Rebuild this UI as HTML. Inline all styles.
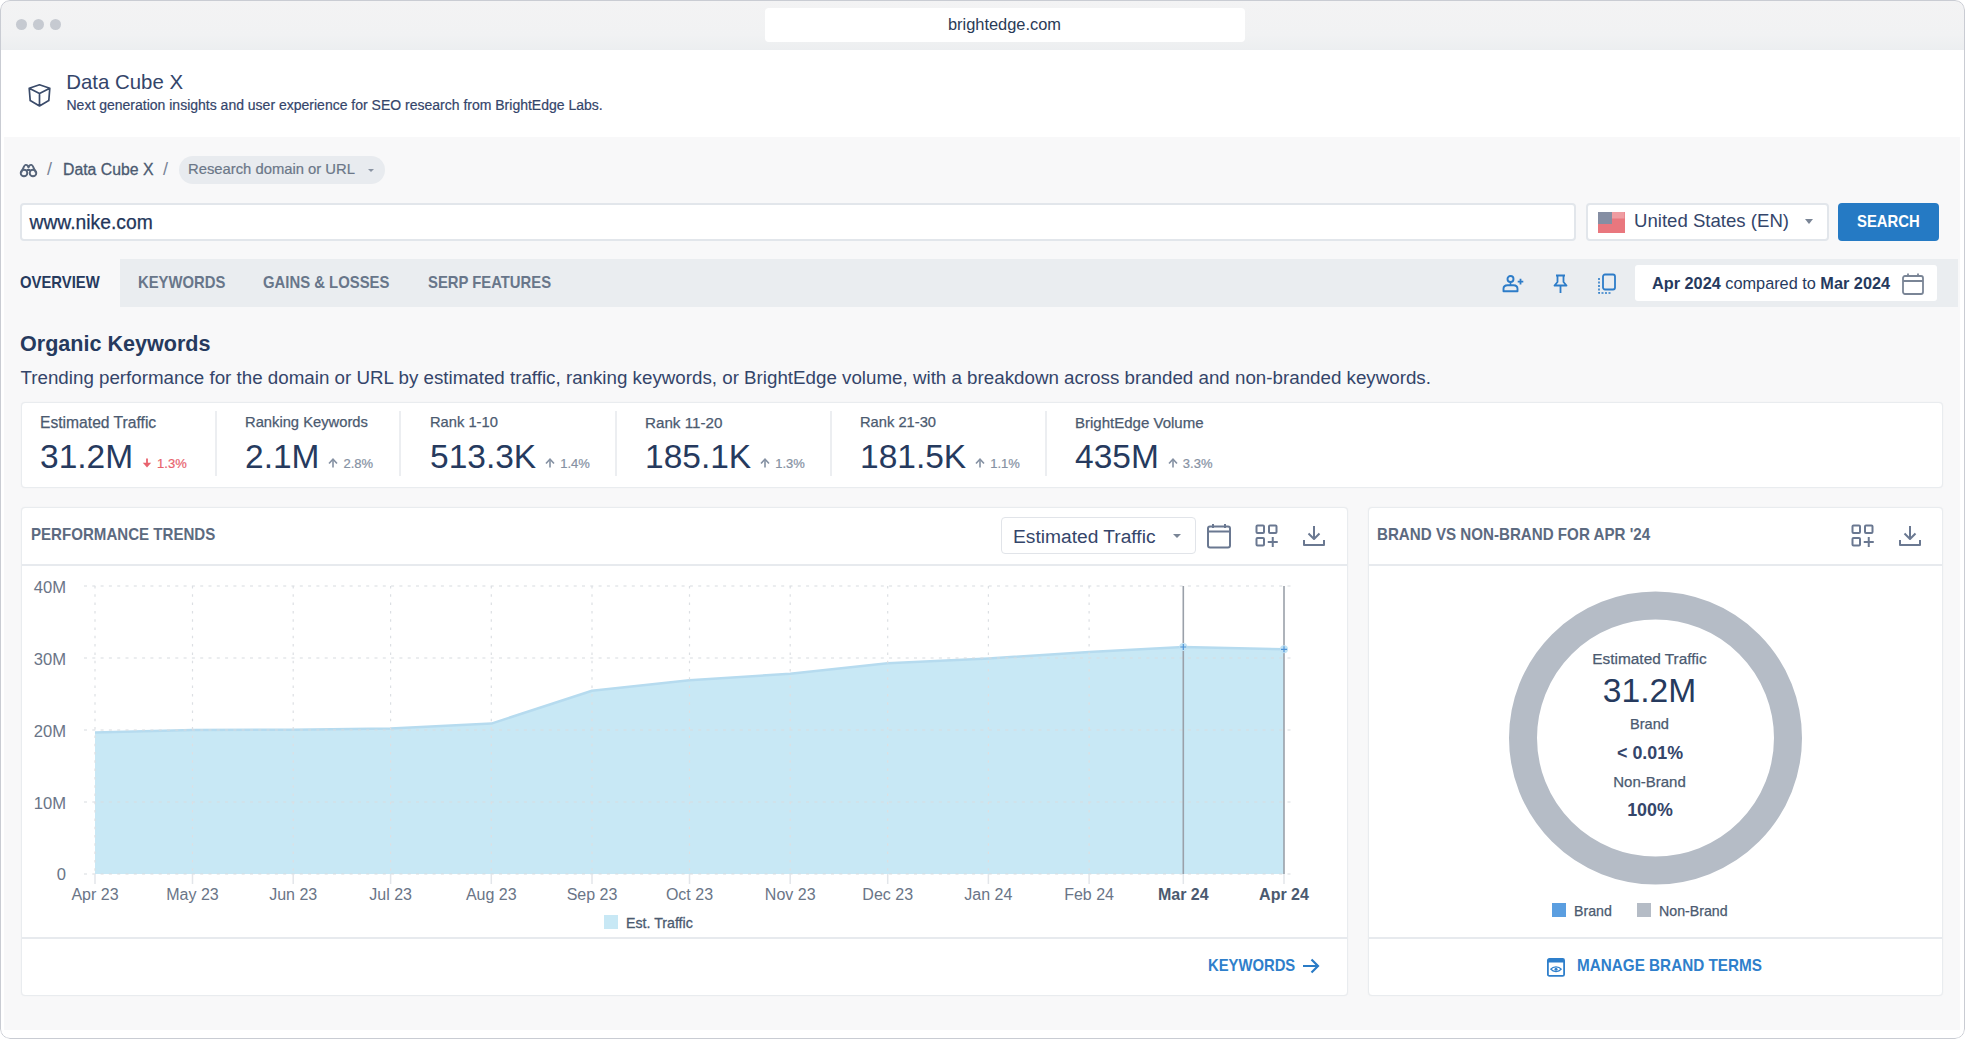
<!DOCTYPE html>
<html><head><meta charset="utf-8">
<style>
*{margin:0;padding:0;box-sizing:border-box}
html,body{width:1965px;height:1039px;overflow:hidden;background:#fff}
body{font-family:"Liberation Sans",sans-serif;color:#2a3b57;position:relative}
.a{position:absolute;white-space:nowrap;line-height:1}
.sx{transform-origin:0 0}
.frame{position:absolute;left:0;top:0;width:1965px;height:1039px;border-radius:10px;overflow:hidden;background:#fff}
.fborder{position:absolute;left:0;top:0;width:1965px;height:1039px;border:1.5px solid #c9ccd3;border-radius:10px;z-index:10}
.titlebar{position:absolute;left:0;top:0;width:1965px;height:50px;background:linear-gradient(#f3f3f4,#f1f2f3 70%,#eceef0)}
.dot{position:absolute;top:19px;width:11px;height:11px;border-radius:50%;background:#c6cad1}
.url{position:absolute;left:765px;top:8px;width:480px;height:34px;background:#fff;border-radius:4px}
.header{position:absolute;left:3px;top:50px;width:1959px;height:86px;background:#fff}
.page{position:absolute;left:3.5px;top:137px;width:1956px;height:893px;background:#f8f8f9}
.card{position:absolute;background:#fff;border:1.5px solid #e9ecef;border-radius:4px;box-shadow:0 0 1px rgba(120,130,145,0.12)}
.tabbar{position:absolute;left:120px;top:259px;width:1838px;height:48px;background:#eaedf0}
.m-label{font-size:15.5px;color:#4b5a70;-webkit-text-stroke:0.25px #4b5a70}
.mrow{display:flex;align-items:flex-end;height:32px}
.m-val{font-size:33.5px;color:#263a5e;line-height:28.5px}
.m-pct{font-size:13px;color:#8591a3;margin-left:5px;line-height:10px;position:relative;top:-2px;letter-spacing:0px;-webkit-text-stroke:0.2px currentColor}
.vdiv{position:absolute;top:411px;width:2px;height:65px;background:#eceef1}
.ylab{font-size:16.6px;color:#6a7587;text-align:right;width:40px}
.xlab{font-size:16px;color:#6a7587;text-align:center;width:80px}
</style></head><body>
<div class="frame">
  <div class="titlebar"></div>
  <div class="dot" style="left:16px"></div>
  <div class="dot" style="left:33px"></div>
  <div class="dot" style="left:50px"></div>
  <div class="url"></div>
  <div class="a" style="left:948px;top:16px;font-size:16.4px;color:#2a3b57">brightedge.com</div>

  <div class="header"></div>
  <!-- cube icon -->
  <svg class="a" style="left:26px;top:82px" width="28" height="28" viewBox="0 0 28 28">
    <path d="M13.5 2.8 L23.8 6.3 L22.8 18.6 L13.5 24 L4.2 18.6 L3.2 6.3 Z M3.2 6.3 L13.5 11.4 L23.8 6.3 M13.5 11.4 L13.5 24" fill="none" stroke="#3a4b6a" stroke-width="1.7" stroke-linejoin="round"/>
  </svg>
  <div class="a" style="left:66.3px;top:71.9px;font-size:20.4px;color:#34456a">Data Cube X</div>
  <div class="a" style="left:66.5px;top:98.4px;font-size:14px;color:#34456a;-webkit-text-stroke:0.2px #34456a">Next generation insights and user experience for SEO research from BrightEdge Labs.</div>

  <div class="page"></div>

  <!-- breadcrumb -->
  <svg class="a" style="left:19px;top:162px" width="19" height="16" viewBox="0 0 19 16">
    <path d="M2.2 10.5 L5 4.5 Q6.5 1.8 8.5 3.5 L9.5 5.5 L10.5 3.5 Q12.5 1.8 14 4.5 L16.8 10.5" fill="none" stroke="#56647a" stroke-width="1.8" stroke-linejoin="round"/>
    <circle cx="5" cy="11" r="3.3" fill="none" stroke="#56647a" stroke-width="1.9"/>
    <circle cx="14" cy="11" r="3.3" fill="none" stroke="#56647a" stroke-width="1.9"/>
    <path d="M7.5 8 H11.5" stroke="#56647a" stroke-width="2"/>
  </svg>
  <div class="a" style="left:47px;top:160px;font-size:18px;color:#7a8597">/</div>
  <div class="a" style="left:63px;top:161.9px;font-size:15.8px;color:#4b5a70;-webkit-text-stroke:0.3px #4b5a70">Data Cube X</div>
  <div class="a" style="left:163px;top:160px;font-size:18px;color:#7a8597">/</div>
  <div class="a" style="left:179px;top:156px;width:206px;height:28px;border-radius:14px;background:#e8ebef"></div>
  <div class="a" style="left:188px;top:162.2px;font-size:14.8px;color:#6b7788;-webkit-text-stroke:0.2px #6b7788">Research domain or URL</div>
  <div class="a" style="left:368px;top:169px;width:0;height:0;border-left:3px solid transparent;border-right:3px solid transparent;border-top:3px solid #8a94a3"></div>

  <!-- search row -->
  <div class="a" style="left:20px;top:202.5px;width:1556px;height:38.5px;background:#fff;border:2px solid #e2e6eb;border-radius:4px"></div>
  <div class="a" style="left:29.5px;top:213.2px;font-size:19.3px;color:#22355a;-webkit-text-stroke:0.25px #22355a">www.nike.com</div>
  <div class="a" style="left:1586px;top:202.5px;width:243px;height:38.5px;background:#fff;border:2px solid #e2e6eb;border-radius:4px"></div>
  <svg class="a" style="left:1597.5px;top:212px" width="27" height="21" viewBox="0 0 27 21">
    <rect x="0" y="0" width="27" height="21" fill="#e9777e"/>
    <rect x="14" y="0" width="12.5" height="6.5" fill="#ef9ca1"/>
    <rect x="0" y="0" width="14" height="12" fill="#858ea3"/>
  </svg>
  <div class="a" style="left:1634px;top:211.8px;font-size:18.6px;color:#34456a">United States (EN)</div>
  <div class="a" style="left:1805px;top:219px;width:0;height:0;border-left:4px solid transparent;border-right:4px solid transparent;border-top:5px solid #7a8596"></div>
  <div class="a" style="left:1838px;top:203px;width:101px;height:38px;background:#257ac4;border-radius:4px"></div>
  <div class="a sx" style="left:1856.8px;top:212.7px;font-size:16.4px;font-weight:bold;color:#fff;transform:scaleX(0.905)">SEARCH</div>

  <!-- tabs -->
  <div class="tabbar"></div>
  <div class="a sx" style="left:19.6px;top:274.1px;font-size:16.4px;font-weight:bold;color:#263a5e;transform:scaleX(0.905)">OVERVIEW</div>
  <div class="a sx" style="left:138px;top:274.1px;font-size:16.4px;font-weight:bold;color:#68768a;transform:scaleX(0.905)">KEYWORDS</div>
  <div class="a sx" style="left:263px;top:274.1px;font-size:16.4px;font-weight:bold;color:#68768a;transform:scaleX(0.907)">GAINS &amp; LOSSES</div>
  <div class="a sx" style="left:427.5px;top:274.1px;font-size:16.4px;font-weight:bold;color:#68768a;transform:scaleX(0.905)">SERP FEATURES</div>

  <!-- right tab icons -->
  <svg class="a" style="left:1501px;top:274px" width="26" height="20" viewBox="0 0 26 20">
    <circle cx="9.5" cy="5" r="3" fill="none" stroke="#2d7cc8" stroke-width="1.9"/>
    <path d="M9.5 8 V11" stroke="#2d7cc8" stroke-width="1.6"/>
    <path d="M2.5 17.2 V14.8 Q2.5 11.2 6.5 11.2 H12.5 Q16.5 11.2 16.5 14.8 V17.2 Z" fill="none" stroke="#2d7cc8" stroke-width="1.9" stroke-linejoin="round"/>
    <path d="M19.5 4.8 V10.4 M16.7 7.6 H22.3" stroke="#2d7cc8" stroke-width="1.8"/>
  </svg>
  <svg class="a" style="left:1552px;top:274px" width="17" height="20" viewBox="0 0 17 20">
    <path d="M4 1.5 H13 M5.5 1.5 V8 L2.5 11.5 H14.5 L11.5 8 V1.5 M8.5 11.5 V19" fill="none" stroke="#2d7cc8" stroke-width="1.8" stroke-linejoin="round"/>
  </svg>
  <svg class="a" style="left:1597px;top:273px" width="21" height="22" viewBox="0 0 21 22">
    <rect x="6" y="1.5" width="12" height="15" rx="2" fill="none" stroke="#2d7cc8" stroke-width="1.8"/>
    <path d="M2 5 V20 H14" fill="none" stroke="#2d7cc8" stroke-width="1.6" stroke-dasharray="2 1.5"/>
  </svg>
  <div class="a" style="left:1635px;top:265px;width:302px;height:36px;background:#fff;border-radius:3px"></div>
  <div class="a" style="left:1652px;top:274.9px;font-size:16.3px;color:#263a5e"><b>Apr 2024</b> compared to <b>Mar 2024</b></div>
  <svg class="a" style="left:1901px;top:272px" width="24" height="24" viewBox="0 0 24 24">
    <rect x="2" y="4" width="20" height="18" rx="2" fill="none" stroke="#7a8596" stroke-width="1.8"/>
    <path d="M2 9 H22 M7 1.5 V5 M17 1.5 V5" stroke="#7a8596" stroke-width="1.8"/>
  </svg>

  <!-- Organic keywords -->
  <div class="a sx" style="left:20px;top:332.9px;font-size:21.9px;font-weight:bold;color:#263a5e;transform:scaleX(0.985)">Organic Keywords</div>
  <div class="a" style="left:20.5px;top:369.2px;font-size:18.76px;color:#34456a">Trending performance for the domain or URL by estimated traffic, ranking keywords, or BrightEdge volume, with a breakdown across branded and non-branded keywords.</div>

  <!-- metrics card -->
  <div class="card" style="left:21px;top:401.5px;width:1921.5px;height:86px"></div>
  <div class="vdiv" style="left:215px"></div>
  <div class="vdiv" style="left:399px"></div>
  <div class="vdiv" style="left:615px"></div>
  <div class="vdiv" style="left:830px"></div>
  <div class="vdiv" style="left:1045px"></div>

  <div class="a m-label" style="left:40px;top:414.5px;font-size:15.65px">Estimated Traffic</div>
  <div class="a mrow" style="left:40px;top:439px"><span class="m-val">31.2M</span><svg width="10" height="10" viewBox="0 0 10 10" style="margin-left:9px;position:relative;top:-3px"><path d="M5 0.5 V8" stroke="#e8636e" stroke-width="1.8"/><path d="M0.8 4.8 L5 9.5 L9.2 4.8 Z" fill="#e8636e"/></svg><span class="m-pct" style="color:#e8636e">1.3%</span></div>
  <div class="a m-label" style="left:245px;top:414.5px;font-size:14.74px">Ranking Keywords</div>
  <div class="a mrow" style="left:245px;top:439px"><span class="m-val">2.1M</span><svg width="10" height="10" viewBox="0 0 10 10" style="margin-left:9px;position:relative;top:-3px"><path d="M5 2 V9.5" stroke="#8591a3" stroke-width="1.6"/><path d="M1 5.5 L5 1.2 L9 5.5" fill="none" stroke="#8591a3" stroke-width="1.6"/></svg><span class="m-pct" style="color:#8591a3">2.8%</span></div>
  <div class="a m-label" style="left:430px;top:414.5px;font-size:14.71px">Rank 1-10</div>
  <div class="a mrow" style="left:430px;top:439px"><span class="m-val">513.3K</span><svg width="10" height="10" viewBox="0 0 10 10" style="margin-left:9px;position:relative;top:-3px"><path d="M5 2 V9.5" stroke="#8591a3" stroke-width="1.6"/><path d="M1 5.5 L5 1.2 L9 5.5" fill="none" stroke="#8591a3" stroke-width="1.6"/></svg><span class="m-pct" style="color:#8591a3">1.4%</span></div>
  <div class="a m-label" style="left:645px;top:414.5px;font-size:15.19px">Rank 11-20</div>
  <div class="a mrow" style="left:645px;top:439px"><span class="m-val">185.1K</span><svg width="10" height="10" viewBox="0 0 10 10" style="margin-left:9px;position:relative;top:-3px"><path d="M5 2 V9.5" stroke="#8591a3" stroke-width="1.6"/><path d="M1 5.5 L5 1.2 L9 5.5" fill="none" stroke="#8591a3" stroke-width="1.6"/></svg><span class="m-pct" style="color:#8591a3">1.3%</span></div>
  <div class="a m-label" style="left:860px;top:414.5px;font-size:14.71px">Rank 21-30</div>
  <div class="a mrow" style="left:860px;top:439px"><span class="m-val">181.5K</span><svg width="10" height="10" viewBox="0 0 10 10" style="margin-left:9px;position:relative;top:-3px"><path d="M5 2 V9.5" stroke="#8591a3" stroke-width="1.6"/><path d="M1 5.5 L5 1.2 L9 5.5" fill="none" stroke="#8591a3" stroke-width="1.6"/></svg><span class="m-pct" style="color:#8591a3">1.1%</span></div>
  <div class="a m-label" style="left:1075px;top:414.5px;font-size:15.02px">BrightEdge Volume</div>
  <div class="a mrow" style="left:1075px;top:439px"><span class="m-val">435M</span><svg width="10" height="10" viewBox="0 0 10 10" style="margin-left:9px;position:relative;top:-3px"><path d="M5 2 V9.5" stroke="#8591a3" stroke-width="1.6"/><path d="M1 5.5 L5 1.2 L9 5.5" fill="none" stroke="#8591a3" stroke-width="1.6"/></svg><span class="m-pct" style="color:#8591a3">3.3%</span></div>

  <!-- performance trends card -->
  <div class="card" style="left:21px;top:507px;width:1327px;height:489px"></div>
  <div class="a" style="left:22px;top:564px;width:1325px;height:1.5px;background:#e7eaee"></div>
  <div class="a" style="left:22px;top:937px;width:1325px;height:1.5px;background:#e7eaee"></div>
  <div class="a sx" style="left:31px;top:526.3px;font-size:16.3px;font-weight:bold;color:#5c6a80;transform:scaleX(0.926)">PERFORMANCE TRENDS</div>

  <div class="a" style="left:1001px;top:517px;width:195px;height:37px;background:#fff;border:1.5px solid #e1e4e9;border-radius:4px"></div>
  <div class="a" style="left:1013px;top:526.5px;font-size:19.2px;color:#34456a">Estimated Traffic</div>
  <div class="a" style="left:1173px;top:534px;width:0;height:0;border-left:4px solid transparent;border-right:4px solid transparent;border-top:4.5px solid #7a8596"></div>
  <svg class="a" style="left:1206px;top:522px" width="26" height="28" viewBox="0 0 26 28">
    <rect x="2" y="4.5" width="22" height="21" rx="2" fill="none" stroke="#6a7891" stroke-width="2"/>
    <path d="M2 9.5 H24 M7 2 V6 M19 2 V6" stroke="#6a7891" stroke-width="2"/>
  </svg>
  <svg class="a" style="left:1255px;top:524px" width="24" height="24" viewBox="0 0 24 24">
    <rect x="1.5" y="1.5" width="7.5" height="7.5" rx="1" fill="none" stroke="#6a7891" stroke-width="2"/>
    <rect x="14" y="1.5" width="7.5" height="7.5" rx="1" fill="none" stroke="#6a7891" stroke-width="2"/>
    <rect x="1.5" y="14" width="7.5" height="7.5" rx="1" fill="none" stroke="#6a7891" stroke-width="2"/>
    <path d="M17.75 13 V23 M12.75 18 H22.75" stroke="#6a7891" stroke-width="2"/>
  </svg>
  <svg class="a" style="left:1302px;top:524px" width="24" height="24" viewBox="0 0 24 24">
    <path d="M12 2 V15 M6.5 9.5 L12 15 L17.5 9.5 M2 16 V21 H22 V16" fill="none" stroke="#6a7891" stroke-width="2" stroke-linejoin="round"/>
  </svg>

  <!-- chart -->
  <svg class="a" style="left:0;top:0" width="1965" height="1039" viewBox="0 0 1965 1039">
    <path d="M95 732.4 L192.5 730 L293.2 729.7 L390.6 728.5 L491.3 723.6 L592 690.7 L689.5 680.3 L790.2 673.7 L887.7 663.3 L988.4 658.4 L1089.1 652 L1183.3 647 L1284 649.3 L1284 874 L95 874 Z" fill="#c8e8f5"/>
    <path d="M95 732.4 L192.5 730 L293.2 729.7 L390.6 728.5 L491.3 723.6 L592 690.7 L689.5 680.3 L790.2 673.7 L887.7 663.3 L988.4 658.4 L1089.1 652 L1183.3 647 L1284 649.3" fill="none" stroke="#b6dbef" stroke-width="2.5" stroke-linejoin="round"/>
    <g stroke="#d8dbe0" stroke-width="1.2" stroke-dasharray="3 5.3">
      <line x1="84" y1="586" x2="1293" y2="586"/>
      <line x1="84" y1="658" x2="1293" y2="658"/>
      <line x1="84" y1="730" x2="1293" y2="730"/>
      <line x1="84" y1="802" x2="1293" y2="802"/>
      <line x1="84" y1="874" x2="1293" y2="874"/>
    </g>
    <g stroke="#dcdfe3" stroke-width="1.2" stroke-dasharray="2.5 5.8"><line x1="95" y1="586" x2="95" y2="874"/><line x1="192.5" y1="586" x2="192.5" y2="874"/><line x1="293.2" y1="586" x2="293.2" y2="874"/><line x1="390.6" y1="586" x2="390.6" y2="874"/><line x1="491.3" y1="586" x2="491.3" y2="874"/><line x1="592" y1="586" x2="592" y2="874"/><line x1="689.5" y1="586" x2="689.5" y2="874"/><line x1="790.2" y1="586" x2="790.2" y2="874"/><line x1="887.7" y1="586" x2="887.7" y2="874"/><line x1="988.4" y1="586" x2="988.4" y2="874"/><line x1="1089.1" y1="586" x2="1089.1" y2="874"/></g>
    <g stroke="#e3e6ea" stroke-width="1.5"><line x1="95" y1="874" x2="95" y2="884"/><line x1="192.5" y1="874" x2="192.5" y2="884"/><line x1="293.2" y1="874" x2="293.2" y2="884"/><line x1="390.6" y1="874" x2="390.6" y2="884"/><line x1="491.3" y1="874" x2="491.3" y2="884"/><line x1="592" y1="874" x2="592" y2="884"/><line x1="689.5" y1="874" x2="689.5" y2="884"/><line x1="790.2" y1="874" x2="790.2" y2="884"/><line x1="887.7" y1="874" x2="887.7" y2="884"/><line x1="988.4" y1="874" x2="988.4" y2="884"/><line x1="1089.1" y1="874" x2="1089.1" y2="884"/><line x1="1183.3" y1="874" x2="1183.3" y2="884"/><line x1="1284" y1="874" x2="1284" y2="884"/></g>
    <g stroke="#9aa0a9" stroke-width="1.6">
      <line x1="1183.3" y1="586" x2="1183.3" y2="874"/>
      <line x1="1284" y1="586" x2="1284" y2="874"/>
    </g>
    <circle cx="1183.3" cy="647" r="4" fill="#c2e3f4"/>
    <circle cx="1284" cy="649.3" r="4" fill="#c2e3f4"/>
    <path d="M1180.3 647 H1186.3 M1183.3 644 V650 M1281 649.3 H1287 M1284 646.3 V652.3" stroke="#4f93d6" stroke-width="1.2"/>
  </svg>

  <div class="a ylab" style="left:26px;top:580px">40M</div>
  <div class="a ylab" style="left:26px;top:652px">30M</div>
  <div class="a ylab" style="left:26px;top:724px">20M</div>
  <div class="a ylab" style="left:26px;top:796px">10M</div>
  <div class="a ylab" style="left:26px;top:867px">0</div>

  <div class="a xlab" style="left:55px;top:886.5px">Apr 23</div>
  <div class="a xlab" style="left:152.5px;top:886.5px">May 23</div>
  <div class="a xlab" style="left:253.2px;top:886.5px">Jun 23</div>
  <div class="a xlab" style="left:350.6px;top:886.5px">Jul 23</div>
  <div class="a xlab" style="left:451.3px;top:886.5px">Aug 23</div>
  <div class="a xlab" style="left:552px;top:886.5px">Sep 23</div>
  <div class="a xlab" style="left:649.5px;top:886.5px">Oct 23</div>
  <div class="a xlab" style="left:750.2px;top:886.5px">Nov 23</div>
  <div class="a xlab" style="left:847.7px;top:886.5px">Dec 23</div>
  <div class="a xlab" style="left:948.4px;top:886.5px">Jan 24</div>
  <div class="a xlab" style="left:1049.1px;top:886.5px">Feb 24</div>
  <div class="a xlab" style="left:1143.3px;top:886.5px;font-weight:bold;color:#4b5a70">Mar 24</div>
  <div class="a xlab" style="left:1244px;top:886.5px;font-weight:bold;color:#4b5a70">Apr 24</div>

  <div class="a" style="left:604px;top:915px;width:14px;height:14px;background:#c8e8f5"></div>
  <div class="a" style="left:626px;top:915.5px;font-size:14.2px;color:#4b5a70;-webkit-text-stroke:0.3px #4b5a70">Est. Traffic</div>

  <div class="a sx" style="left:1208px;top:957px;font-size:16.3px;font-weight:bold;color:#2f7fcb;transform:scaleX(0.91)">KEYWORDS</div>
  <svg class="a" style="left:1301px;top:957px" width="20" height="18" viewBox="0 0 20 18">
    <path d="M2 9 H17 M10.5 2.5 L17 9 L10.5 15.5" fill="none" stroke="#2a7bc6" stroke-width="2.2"/>
  </svg>

  <!-- brand card -->
  <div class="card" style="left:1368px;top:507px;width:574.5px;height:489px"></div>
  <div class="a" style="left:1369px;top:564px;width:572.5px;height:1.5px;background:#e7eaee"></div>
  <div class="a" style="left:1369px;top:937px;width:572.5px;height:1.5px;background:#e7eaee"></div>
  <div class="a sx" style="left:1377px;top:526.3px;font-size:16.3px;font-weight:bold;color:#5c6a80;transform:scaleX(0.93)">BRAND VS NON-BRAND FOR APR '24</div>
  <svg class="a" style="left:1851px;top:524px" width="24" height="24" viewBox="0 0 24 24">
    <rect x="1.5" y="1.5" width="7.5" height="7.5" rx="1" fill="none" stroke="#6a7891" stroke-width="2"/>
    <rect x="14" y="1.5" width="7.5" height="7.5" rx="1" fill="none" stroke="#6a7891" stroke-width="2"/>
    <rect x="1.5" y="14" width="7.5" height="7.5" rx="1" fill="none" stroke="#6a7891" stroke-width="2"/>
    <path d="M17.75 13 V23 M12.75 18 H22.75" stroke="#6a7891" stroke-width="2"/>
  </svg>
  <svg class="a" style="left:1898px;top:524px" width="24" height="24" viewBox="0 0 24 24">
    <path d="M12 2 V15 M6.5 9.5 L12 15 L17.5 9.5 M2 16 V21 H22 V16" fill="none" stroke="#6a7891" stroke-width="2" stroke-linejoin="round"/>
  </svg>

  <svg class="a" style="left:1500px;top:582px" width="312" height="312" viewBox="0 0 312 312">
    <circle cx="155.5" cy="156" r="132.5" fill="none" stroke="#b5bcc6" stroke-width="28"/>
  </svg>
  <div class="a" style="left:1549.5px;top:651px;width:200px;text-align:center;font-size:15.4px;color:#4b5a70;-webkit-text-stroke:0.25px #4b5a70">Estimated Traffic</div>
  <div class="a" style="left:1549.5px;top:674px;width:200px;text-align:center;font-size:33.6px;color:#263a5e">31.2M</div>
  <div class="a" style="left:1549.5px;top:717.2px;width:200px;text-align:center;font-size:14.6px;color:#4b5a70;-webkit-text-stroke:0.25px #4b5a70">Brand</div>
  <div class="a" style="left:1549.5px;top:744.3px;width:200px;text-align:center;font-size:18.5px;font-weight:bold;color:#34456a;transform:scaleX(0.965)">&lt; 0.01%</div>
  <div class="a" style="left:1549.5px;top:773.9px;width:200px;text-align:center;font-size:15px;color:#4b5a70;-webkit-text-stroke:0.25px #4b5a70">Non-Brand</div>
  <div class="a" style="left:1549.5px;top:800.8px;width:200px;text-align:center;font-size:18.5px;font-weight:bold;color:#34456a;transform:scaleX(0.965)">100%</div>

  <div class="a" style="left:1552px;top:903px;width:14px;height:14px;background:#5b9ee0"></div>
  <div class="a" style="left:1574px;top:904.3px;font-size:14.2px;color:#4b5a70;-webkit-text-stroke:0.25px #4b5a70">Brand</div>
  <div class="a" style="left:1637px;top:903px;width:14px;height:14px;background:#b5bcc6"></div>
  <div class="a" style="left:1659px;top:904.3px;font-size:14.2px;color:#4b5a70;-webkit-text-stroke:0.25px #4b5a70">Non-Brand</div>

  <svg class="a" style="left:1546px;top:957px" width="20" height="20" viewBox="0 0 20 20">
    <rect x="1.9" y="1.9" width="16.2" height="17" rx="1.5" fill="none" stroke="#2f7fcb" stroke-width="1.8"/>
    <rect x="1.9" y="1.9" width="16.2" height="3.6" fill="#2f7fcb"/>
    <path d="M4.8 12.2 C7.2 9 12.8 9 15.2 12.2 C12.8 15.4 7.2 15.4 4.8 12.2 Z" fill="none" stroke="#2f7fcb" stroke-width="1.3"/>
    <circle cx="10" cy="12.2" r="1.5" fill="#2f7fcb"/>
  </svg>
  <div class="a sx" style="left:1577px;top:957.9px;font-size:16.6px;font-weight:bold;color:#2f7fcb;transform:scaleX(0.92)">MANAGE BRAND TERMS</div>
  <div class="fborder"></div>
</div>
</body></html>
